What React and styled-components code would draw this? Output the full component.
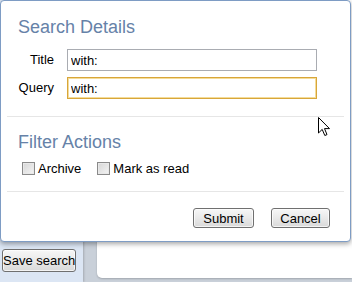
import styled, { createGlobalStyle } from "styled-components";

// Global page setup
const GlobalStyle = createGlobalStyle`
  html, body {
    margin: 0;
    padding: 0;
    background: #cfd6de;
  }
  body {
    font-family: "Liberation Sans", Arial, sans-serif;
    font-size: 13px;
    color: #000;
  }
`;

const Page = styled.div`
  position: relative;
  width: 352px;
  height: 282px;
  overflow: hidden;
  display: flex;
`;

// Background layout (behind the dialog)
const Sidebar = styled.aside`
  width: 83px;
  box-sizing: border-box;
  background: #dce6f4;
  display: flex;
  align-items: flex-end;
  padding: 0 0 10px 2px;
  box-shadow: 1px 0 2px rgba(0, 0, 0, 0.18);
  z-index: 1;
`;

const Main = styled.main`
  flex: 1;
  display: flex;
  padding: 0 0 4px 14px;
  background: #c9d0d9;
`;

const Panel = styled.div`
  flex: 1;
  background: #fff;
  border-radius: 0 0 0 5px;
  box-shadow: 0 1px 2px rgba(0, 0, 0, 0.2);
`;

const Button = styled.button`
  width: ${({ $w }) => $w}px;
  height: ${({ $h }) => $h || 20}px;
  padding: 0;
  white-space: nowrap;
  font-family: "Liberation Sans", Arial, sans-serif;
  font-size: 13px;
  color: #000;
  background: linear-gradient(#f7f7f7, #e9e9e9 50%, #d9d9d9);
  border: 1px solid #707070;
  border-radius: 3px;
  box-shadow: inset 0 0 0 1px rgba(255, 255, 255, 0.7);
`;

// Dialog
const Dialog = styled.div`
  position: absolute;
  top: 0;
  left: 0;
  width: 351px;
  height: 242px;
  box-sizing: border-box;
  background: #fff;
  border: 1px solid #7e9cc4;
  border-radius: 4px;
  box-shadow: 0 2px 5px rgba(0, 0, 0, 0.35);
  z-index: 2;
`;

const Heading = styled.h2`
  margin: ${({ $top }) => $top}px 0 0 17px;
  font-size: 18px;
  line-height: 22px;
  font-weight: normal;
  color: #6682a8;
`;

const FormGrid = styled.div`
  display: grid;
  grid-template-columns: 53px 250px;
  column-gap: 13px;
  row-gap: 6px;
  margin-top: 11px;
`;

const Label = styled.label`
  text-align: right;
  line-height: 22px;
`;

const Input = styled.input`
  height: 22px;
  box-sizing: border-box;
  margin: 0;
  padding: 0 3px;
  font-family: "Liberation Sans", Arial, sans-serif;
  font-size: 13px;
  color: #000;
  outline: none;
  border: 1px solid ${({ $focused }) => ($focused ? "#d8a63a" : "#a9acb2")};
  box-shadow: ${({ $focused }) =>
    $focused ? "inset 0 0 0 1px #f4dc9a" : "none"};
`;

const Separator = styled.hr`
  margin: ${({ $top }) => $top}px 6px 0;
  border: 0;
  border-top: 1px solid #e6e6e6;
`;

const CheckRow = styled.div`
  display: flex;
  gap: 16px;
  margin: 9px 0 0 21px;
  height: 13px;
`;

const CheckItem = styled.label`
  display: flex;
  align-items: center;
  gap: 3px;
  line-height: 13px;
`;

const Box = styled.span`
  width: 13px;
  height: 13px;
  box-sizing: border-box;
  border: 1px solid #8a8a8a;
  background: linear-gradient(135deg, #d6d6d6, #f4f4f4);
  box-shadow: inset 0 0 0 1px #e8e8e8;
`;

const Actions = styled.div`
  display: flex;
  justify-content: flex-end;
  gap: 17px;
  margin-top: 16px;
  padding-right: 20px;
`;

const Cursor = styled.svg`
  position: absolute;
  left: 318px;
  top: 117px;
  z-index: 3;
`;

export default function App() {
  return (
    <>
      <GlobalStyle />
      <Page>
        <Sidebar>
          <Button $w={74} $h={23}>Save search</Button>
        </Sidebar>
        <Main>
          <Panel />
        </Main>

        <Dialog>
          <Heading $top={15}>Search Details</Heading>
          <FormGrid>
            <Label>Title</Label>
            <Input defaultValue="with:" />
            <Label>Query</Label>
            <Input defaultValue="with:" $focused />
          </FormGrid>

          <Separator $top={17} />

          <Heading $top={14}>Filter Actions</Heading>
          <CheckRow>
            <CheckItem>
              <Box />
              Archive
            </CheckItem>
            <CheckItem>
              <Box />
              Mark as read
            </CheckItem>
          </CheckRow>

          <Separator $top={16} />

          <Actions>
            <Button $w={61}>Submit</Button>
            <Button $w={59}>Cancel</Button>
          </Actions>
        </Dialog>

        <Cursor width="13" height="20" viewBox="0 0 13 20">
          <path
            d="M0.5 0.5 L0.5 16 L4.2 12.4 L6.8 18.5 L9 17.6 L6.5 11.6 L11.5 11.6 Z"
            fill="#fff"
            stroke="#000"
            strokeWidth="1"
            strokeLinejoin="miter"
          />
        </Cursor>
      </Page>
    </>
  );
}
